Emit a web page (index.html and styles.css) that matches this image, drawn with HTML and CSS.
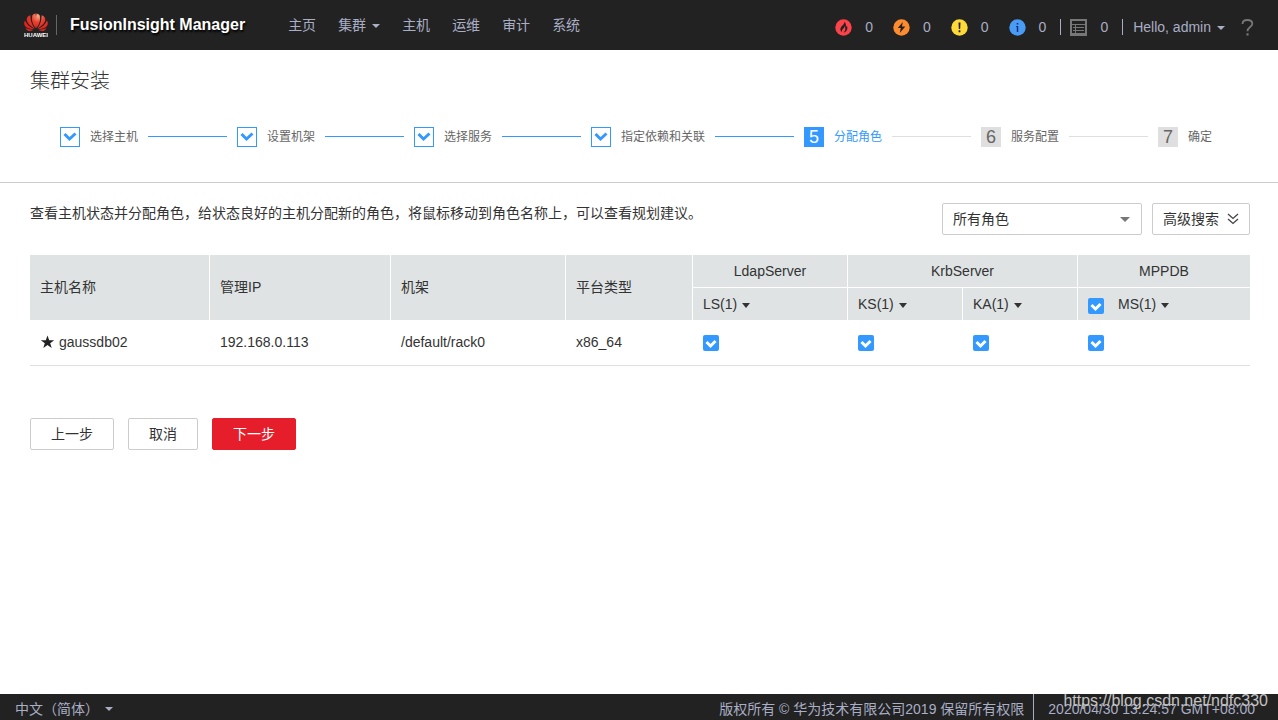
FILE: index.html
```
<!DOCTYPE html>
<html lang="zh-CN">
<head>
<meta charset="utf-8">
<title>FusionInsight Manager</title>
<link rel="stylesheet" href="styles.css">
</head>
<body>
<header class="topbar">
  <div class="brand">
    <svg class="logo" width="24" height="24" viewBox="0 0 24 24" role="img" aria-label="HUAWEI">
      <defs><radialGradient id="petal" gradientUnits="userSpaceOnUse" cx="14" cy="3" r="14"><stop offset="0" stop-color="#f7b08c"/><stop offset="0.45" stop-color="#e8402f"/><stop offset="1" stop-color="#e0241d"/></radialGradient></defs>
      <g fill="url(#petal)">
        <path d="M11.700 15.200C8.200 10.500 7 5.500 8.500 2.200 9.200 1.100 10.300.6 11.600.4c.5 4 .6 9.700.1 14.800z"/>
        <path d="M12.300 15.200C15.800 10.500 17 5.500 15.500 2.200 14.800 1.100 13.700.6 12.400.4c-.5 4-.6 9.700-.1 14.800z"/>
        <path d="M10.700 15.500C7.800 11.500 6.200 7.500 6.400 2.300 3.500 3.200 2.300 5.200 2.800 7.200c.5 3.200 3.900 6.100 7.900 8.300z"/>
        <path d="M13.300 15.500C16.200 11.500 17.800 7.500 17.600 2.300c2.900.9 4.100 2.900 3.600 4.900-.5 3.200-3.900 6.100-7.900 8.300z"/>
        <path d="M10.100 16.100C6 14.200 2.800 11.400 1 7.400c-1.300 2.200-1.100 4.500.7 6.300 1.800 1.800 4.800 2.300 8.400 2.400z"/>
        <path d="M13.900 16.100C18 14.200 21.200 11.400 23 7.400c1.300 2.200 1.100 4.500-.7 6.300-1.800 1.800-4.800 2.300-8.400 2.400z"/>
        <path d="M9.700 16.700c-2.700.1-5.200-.2-8.100-1.600.9 2.400 2.600 3.300 4.400 3 1.500-.3 2.700-.7 3.700-1.400z"/>
        <path d="M14.300 16.700c2.700.1 5.200-.2 8.100-1.600-.9 2.400-2.600 3.300-4.400 3-1.500-.3-2.700-.7-3.700-1.400z"/>
      </g>
      <text class="logo-text" x="12" y="24" text-anchor="middle">HUAWEI</text>
    </svg>
    <span class="product">FusionInsight Manager</span>
  </div>
  <nav class="menu">
    <a href="#">主页</a>
    <a href="#">集群<span class="caret"></span></a>
    <a href="#">主机</a>
    <a href="#">运维</a>
    <a href="#">审计</a>
    <a href="#">系统</a>
  </nav>
  <div class="status">
    <a class="alarm" href="#"><svg width="17" height="17" viewBox="0 0 17 17"><circle cx="8.500" cy="8.500" r="8.200" fill="#fc4349"/><path d="M9.400 2.800c.3 2-1.400 3-2.700 4.500C5 9.300 4.600 11.500 7 13.300c-.3-1.800.1-2.700 1.400-3.800.8-.7 1.200-1.600 1-2.800 1.500 2.300 1.300 4.300-.7 6.900 3.500-1.200 4.400-4.500 3.100-7.200-.2.800-.4 1.200-.9 1.500.3-2-.1-3.900-1.500-5.100z" fill="#222"/></svg><span>0</span></a>
    <a class="alarm" href="#"><svg width="17" height="17" viewBox="0 0 17 17"><circle cx="8.500" cy="8.500" r="8.200" fill="#fd8b2f"/><path d="M9.800 3 4.800 9h3l-1 5 5.500-6.500H9z" fill="#222"/></svg><span>0</span></a>
    <a class="alarm" href="#"><svg width="17" height="17" viewBox="0 0 17 17"><circle cx="8.500" cy="8.500" r="8.200" fill="#fed93a"/><path d="M7.500 3.500h2L9.200 10H7.800zM7.600 11.300h1.800v1.900H7.600z" fill="#222"/></svg><span>0</span></a>
    <a class="alarm" href="#"><svg width="17" height="17" viewBox="0 0 17 17"><circle cx="8.500" cy="8.500" r="8.200" fill="#489cf6"/><path d="M7.700 4h1.600v1.600H7.700zM7.200 7h2v6H7.800V8h-.6z" fill="#1c2a72"/></svg><span>0</span></a>
    <a class="tasks" href="#"><svg width="17" height="17" viewBox="0 0 17 17" fill="none" stroke="#777" stroke-width="1"><rect x="1" y="1" width="15" height="15" stroke-width="2"/><path d="M2 5.500h13M3 8.500h11M3 11.500h11M2 14.500h13M5.500 5.500V15"/></svg><span>0</span></a>
    <button class="user" type="button">Hello, admin<span class="caret"></span></button>
    <a class="help" href="#" aria-label="Help"><svg width="13" height="17" viewBox="0 0 13 17" fill="none" stroke="#777" stroke-width="1.800"><path d="M1.500 5C1.500 2.300 3.500 1 6.300 1S11.300 2.400 11.300 4.700C11.300 8 6.500 8 6.500 12.200"/><path d="M6.500 14.300v2.200" stroke-width="2.200"/></svg></a>
  </div>
</header>

<main class="page">
  <section class="wizard">
    <h1>集群安装</h1>
    <ol class="steps">
      <li class="step done"><span class="mark"><svg width="14" height="10" viewBox="0 0 14 10"><path d="M1.500 2 6.500 7 12.500 1.500"/></svg></span><span class="label">选择主机</span></li>
      <li class="step done"><span class="mark"><svg width="14" height="10" viewBox="0 0 14 10"><path d="M1.500 2 6.500 7 12.500 1.500"/></svg></span><span class="label">设置机架</span></li>
      <li class="step done"><span class="mark"><svg width="14" height="10" viewBox="0 0 14 10"><path d="M1.500 2 6.500 7 12.500 1.500"/></svg></span><span class="label">选择服务</span></li>
      <li class="step done"><span class="mark"><svg width="14" height="10" viewBox="0 0 14 10"><path d="M1.500 2 6.500 7 12.500 1.500"/></svg></span><span class="label">指定依赖和关联</span></li>
      <li class="step current" aria-current="step"><span class="mark">5</span><span class="label">分配角色</span></li>
      <li class="step"><span class="mark">6</span><span class="label">服务配置</span></li>
      <li class="step"><span class="mark">7</span><span class="label">确定</span></li>
    </ol>
  </section>

  <section class="content">
    <div class="toolbar">
      <p>查看主机状态并分配角色，给状态良好的主机分配新的角色，将鼠标移动到角色名称上，可以查看规划建议。</p>
      <select class="roles" aria-label="角色"><option>所有角色</option></select>
      <button class="btn search" type="button">高级搜索<svg width="12" height="12" viewBox="0 0 12 12" fill="none" stroke="#444" stroke-width="1.300"><path d="M1 1l5 4.500L11 1M1 6l5 4.500L11 6"/></svg></button>
    </div>
    <table class="hosts">
      <colgroup><col class="c-name"><col class="c-ip"><col class="c-rack"><col class="c-type"><col class="c-ls"><col class="c-role"><col class="c-role"><col class="c-ms"></colgroup>
      <thead>
        <tr>
          <th rowspan="2">主机名称</th><th rowspan="2">管理IP</th><th rowspan="2">机架</th><th rowspan="2">平台类型</th>
          <th class="group">LdapServer</th><th class="group" colspan="2">KrbServer</th><th class="group">MPPDB</th>
        </tr>
        <tr>
          <th>LS(1)<span class="caret dark"></span></th>
          <th>KS(1)<span class="caret dark"></span></th>
          <th>KA(1)<span class="caret dark"></span></th>
          <th><label class="all"><input type="checkbox" checked><span>MS(1)<span class="caret dark"></span></span></label></th>
        </tr>
      </thead>
      <tbody>
        <tr>
          <td><span class="host"><svg width="15" height="14" viewBox="0 0 15 14"><path d="M7.500 0.500 9.200 5.200H14.200L10.200 8.200 11.700 13 7.500 10.100 3.300 13 4.800 8.200.8 5.200H5.800z" fill="#222"/></svg>gaussdb02</span></td>
          <td>192.168.0.113</td><td>/default/rack0</td><td>x86_64</td>
          <td class="pick"><input type="checkbox" aria-label="LS" checked></td>
          <td class="pick"><input type="checkbox" aria-label="KS" checked></td>
          <td class="pick"><input type="checkbox" aria-label="KA" checked></td>
          <td class="pick"><input type="checkbox" aria-label="MS" checked></td>
        </tr>
      </tbody>
    </table>
    <div class="actions">
      <button class="btn" type="button">上一步</button>
      <button class="btn" type="button">取消</button>
      <button class="btn primary" type="button">下一步</button>
    </div>
  </section>
</main>

<footer class="bottombar">
  <select class="language" aria-label="语言"><option>中文（简体）</option></select>
  <span class="copyright">版权所有 © 华为技术有限公司2019 保留所有权限</span>
  <time class="clock">2020/04/30 13:24:57 GMT+08:00</time>
  <span class="watermark">https://blog.csdn.net/ndfc330</span>
</footer>
</body>
</html>
```
FILE: styles.css
```
* { box-sizing: border-box; }
body {
  margin: 0;
  min-height: 100vh;
  display: flex;
  flex-direction: column;
  background: #fff;
  color: #333;
  font: 14px/20px "Liberation Sans", "Noto Sans CJK SC", sans-serif;
}
a { color: inherit; text-decoration: none; }
svg { display: block; flex: none; }
button, select, input { font: inherit; color: inherit; margin: 0; }

.caret {
  display: inline-block;
  margin-left: 6px;
  vertical-align: 2px;
  border: 4px solid transparent;
  border-top-color: currentColor;
  border-bottom: 0;
}
.caret.dark { margin-left: 5px; vertical-align: 1px; border-top-width: 5px; }

.topbar {
  display: flex;
  align-items: center;
  height: 50px;
  padding: 0 24px;
  background: #222;
  color: #a9aec5;
}
.brand { display: flex; align-items: center; }
.logo-text { font: bold 6px "Liberation Sans", sans-serif; fill: #fff; }
.product {
  margin-left: 8px;
  padding-left: 13px;
  border-left: 1px solid #666;
  color: #fff;
  font-size: 16px;
  font-weight: bold;
  text-shadow: 1px 2px 2px #000;
}
.menu { display: flex; gap: 22px; margin-left: 43px; }
.status { display: flex; align-items: center; margin-left: auto; padding-top: 4px; }
.alarm, .tasks { display: flex; align-items: center; gap: 13px; }
.alarm { margin-right: 20px; }
.alarm:nth-child(4) { margin-right: 14px; }
.tasks, .user { height: 16px; border-left: 1px solid #a9aec5; }
.tasks { padding-left: 9px; margin-right: 14px; }
.user {
  padding: 0 0 0 10px;
  border-width: 0 0 0 1px;
  background: none;
  line-height: 16px;
}
.help { margin-left: 16px; }

.page { flex: 1; }
.wizard { padding: 20px 30px 35px; border-bottom: 1px solid #ccc; }
.wizard h1 { margin: 0; font-size: 20px; line-height: 22px; font-weight: 300; }
.steps {
  display: flex;
  gap: 10px;
  margin: 35px 36px 0 30px;
  padding: 0;
  list-style: none;
}
.step { display: flex; align-items: center; gap: 10px; flex: 1 1 auto; color: #666; font-size: 12px; }
.step:last-child { flex: none; }
.step:not(:last-child)::after { content: ""; flex: 1; height: 1px; margin-bottom: 1px; background: #dfdfdf; }
.step.done:not(:last-child)::after { background: #39f; }
.mark {
  display: flex;
  align-items: center;
  justify-content: center;
  width: 20px;
  height: 20px;
  background: #dfdfdf;
  font-size: 18px;
}
.done .mark { border: 1px solid #39f; background: #fff; }
.mark path { fill: none; stroke: #39f; stroke-width: 3; }
.step.current { color: #39f; }
.current .mark { background: #39f; color: #fff; }

.content { padding: 20px 28px 20px 30px; }
.toolbar { display: flex; gap: 10px; }
.toolbar p { flex: 1; margin: 0; }
.btn, .roles {
  height: 32px;
  border: 1px solid #ccc;
  border-radius: 2px;
  background: #fff;
}
.btn { padding: 0 20px; }
.search { display: flex; align-items: center; gap: 8px; padding: 0 10px; }
.roles {
  appearance: none;
  width: 200px;
  padding: 0 10px;
  background: #fff url("data:image/svg+xml,%3Csvg xmlns='http://www.w3.org/2000/svg' width='10' height='5'%3E%3Cpath d='M0 0h10L5 5z' fill='%23777'/%3E%3C/svg%3E") no-repeat right 11px center;
}

.hosts { width: 100%; margin-top: 20px; table-layout: fixed; border-collapse: separate; border-spacing: 0; }
.c-name { width: 180px; }
.c-ip { width: 181px; }
.c-rack { width: 175px; }
.c-type { width: 127px; }
.c-ls { width: 155px; }
.c-role { width: 115px; }
.c-ms { width: 172px; }
.hosts th {
  height: 32px;
  padding: 0 10px;
  border-right: 1px solid #fff;
  background: #dfe3e4;
  font-weight: normal;
  text-align: left;
}
.hosts th[rowspan] { padding-bottom: 2px; }
.hosts th.group { height: 33px; border-bottom: 1px solid #fff; text-align: center; }
.hosts th:last-child { border-right: 0; }
.hosts td { height: 46px; padding: 0 10px 2px; border-bottom: 1px solid #dfdfdf; }
.hosts td.pick { padding-bottom: 0; }
.host { display: flex; align-items: center; gap: 4px; }
.all { display: flex; align-items: center; gap: 14px; }
.all input { margin-top: 4px; }
.hosts input {
  appearance: none;
  display: block;
  width: 16px;
  height: 16px;
  border-radius: 2px;
  background: #39f url("data:image/svg+xml,%3Csvg xmlns='http://www.w3.org/2000/svg' width='16' height='16'%3E%3Cpath d='M3.500 7 7.500 11 12.500 6' fill='none' stroke='%23fff' stroke-width='3'/%3E%3C/svg%3E") no-repeat;
}

.actions { display: flex; gap: 14px; margin-top: 52px; }
.primary { border-color: #e61e2b; background: #e61e2b; color: #fff; }

.bottombar {
  position: relative;
  display: flex;
  align-items: stretch;
  height: 26px;
  padding: 0 23px 0 15px;
  background: #222;
  color: #a9aec5;
  line-height: 30px;
}
.language {
  appearance: none;
  width: 98px;
  height: 30px;
  padding: 0;
  border: 0;
  background: url("data:image/svg+xml,%3Csvg xmlns='http://www.w3.org/2000/svg' width='8' height='4'%3E%3Cpath d='M0 0h8L4 4z' fill='%23a9aec5'/%3E%3C/svg%3E") no-repeat right center;
}
.copyright { margin-left: auto; padding-right: 9px; }
.clock { padding-left: 14px; border-left: 1px solid #a9aec5; }
.watermark {
  position: absolute;
  right: 10px;
  top: -3px;
  color: #c4c4c4;
  font-size: 16px;
  line-height: 20px;
}
.hosts .all input { margin-top: 4px; }
```
